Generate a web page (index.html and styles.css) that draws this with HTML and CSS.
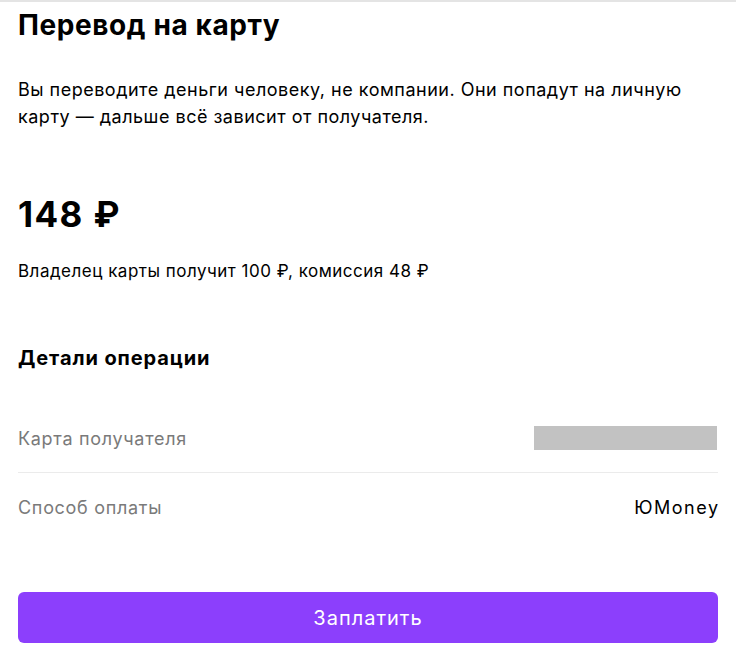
FILE: index.html
```html
<!DOCTYPE html>
<html lang="ru">
<head>
<meta charset="utf-8">
<link rel="stylesheet" href="styles.css">
</head>
<body>
<main class="page">
  <h1 class="title">Перевод на карту</h1>
  <p class="lead">Вы переводите деньги человеку, не компании. Они попадут на личную карту — дальше всё зависит от получателя.</p>
  <div class="amount">148 ₽</div>
  <p class="note">Владелец карты получит 100 ₽, комиссия 48 ₽</p>
  <h2 class="section">Детали операции</h2>
  <div class="details">
    <div class="row">
      <span class="label">Карта получателя</span>
      <span class="mask"></span>
    </div>
    <div class="row">
      <span class="label">Способ оплаты</span>
      <span class="value">ЮMoney</span>
    </div>
  </div>
  <button class="pay">Заплатить</button>
</main>
</body>
</html>
```
FILE: styles.css
```css
html, body {
  margin: 0;
  padding: 0;
  background: #fff;
}
body {
  font-family: Inter, "Noto Sans", sans-serif;
  color: #000;
}
.page {
  border-top: 2px solid #e4e4e4;
  padding: 0 18px;
  display: flex;
  flex-direction: column;
}
.title {
  margin: 5px 0 0;
  font-size: 28px;
  line-height: 36px;
  font-weight: 700;
  letter-spacing: 0.6px;
}
.lead {
  margin: 33px 0 0;
  font-size: 18px;
  line-height: 27px;
  letter-spacing: 0.5px;
}
.amount {
  margin-top: 64px;
  font-size: 35px;
  line-height: 40px;
  font-weight: 700;
  letter-spacing: 1.4px;
}
.note {
  margin: 26px 0 0;
  font-size: 17px;
  line-height: 22px;
  letter-spacing: 0.5px;
}
.section {
  margin: 62px 0 0;
  font-size: 20px;
  line-height: 28px;
  font-weight: 700;
  letter-spacing: 0.9px;
}
.details {
  margin-top: 32px;
  display: flex;
  flex-direction: column;
}
.row {
  display: flex;
  justify-content: space-between;
  align-items: center;
  height: 68px;
  font-size: 18px;
  letter-spacing: 0.7px;
}
.row + .row {
  border-top: 1px solid #ebebeb;
}
.label {
  color: #7a7a7a;
}
.mask {
  width: 183px;
  height: 24px;
  background: #c2c2c2;
  margin-right: 1px;
}
.value {
  color: #000;
  letter-spacing: 1.5px;
  margin-right: -1.5px;
}
.pay {
  margin-top: 51px;
  height: 51px;
  border: 0;
  border-radius: 6px;
  background: #8c3ffc;
  color: #fff;
  font-family: inherit;
  font-size: 20px;
  letter-spacing: 1px;
  cursor: pointer;
}
```
